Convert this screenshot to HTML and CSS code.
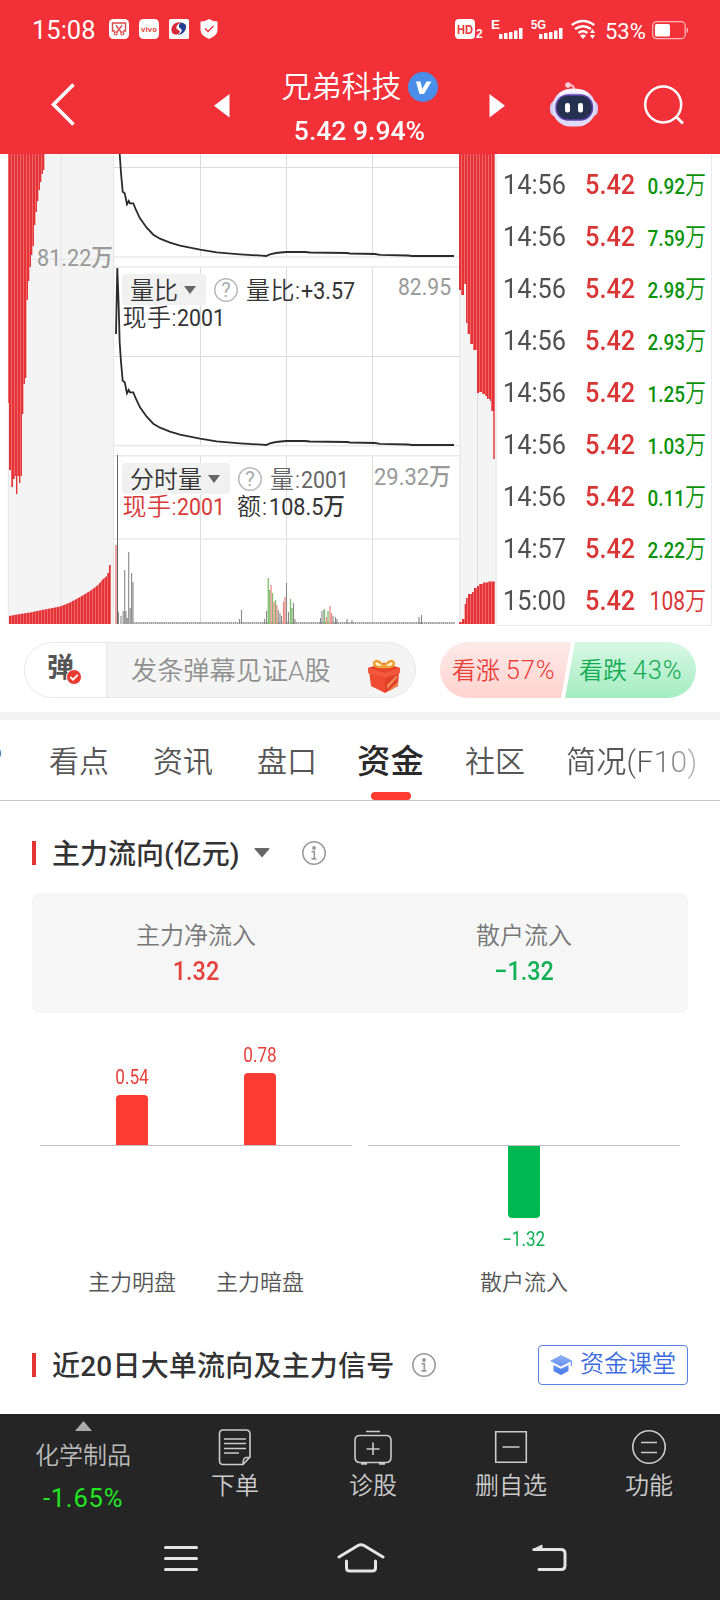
FILE: index.html
```html
<!DOCTYPE html>
<html lang="zh-CN">
<head>
    <meta charset="UTF-8">
    <meta name="viewport" content="width=device-width, initial-scale=1.0">
    <title>兄弟科技</title>
    <link rel="stylesheet" href="styles.css">
</head>
<body>
    <div class="app">
        <!-- Header -->
        <header class="header">
            <div class="status-bar">
                <span class="clock">15:08</span>
                <div class="status-left">
                    <svg width="20" height="20" viewBox="0 0 20 20">
                        <rect width="20" height="20" rx="4.5" fill="#fff"/>
                        <path d="M6 12H3.500V4H16.500V12H14M7 6.500L12.500 13.500M13 6.500L7.500 13.500" fill="none" stroke="#dc4a4c" stroke-width="1.400"/>
                        <circle cx="6.700" cy="14.500" r="1.500" fill="none" stroke="#dc4a4c" stroke-width="1.200"/>
                        <circle cx="13.300" cy="14.500" r="1.500" fill="none" stroke="#dc4a4c" stroke-width="1.200"/>
                    </svg>
                    <svg width="20" height="20" viewBox="0 0 20 20">
                        <rect width="20" height="20" rx="4.500" fill="#fff"/>
                        <text x="2" y="12.500" textLength="16" lengthAdjust="spacingAndGlyphs" class="vivo">vivo</text>
                    </svg>
                    <svg width="20" height="20" viewBox="0 0 20 20">
                        <rect width="20" height="20" rx="1.500" fill="#fff"/>
                        <path d="M12 3.500C6 2.500 2 7 2.500 11.500C3 15 6 16 8 15.500C12 14 11.500 11.500 8.500 10.500C6 9 8 5 12 3.500Z" fill="#d8283c"/>
                        <path d="M12 3.500C15 4 17.500 5 17 8.500C16.500 12.500 13 16 8.500 16C12.500 14 14 11.500 11.500 9.500C9 8 9.500 5.500 12 3.500Z" fill="#233f94"/>
                    </svg>
                    <svg class="shield" width="18" height="20" viewBox="0 0 18 20">
                        <path d="M9 0Q13 2.500 17.500 2.500V11Q17.500 16.500 9 20Q.5 16.500 .5 11V2.500Q5 2.500 9 0Z" fill="#fff"/>
                        <path d="M5 9.500L8 12.500L13.500 7" fill="none" stroke="#ef3038" stroke-width="1.300"/>
                    </svg>
                </div>
                <div class="status-right">
                    <svg width="29" height="22" viewBox="0 0 29 22">
                        <rect y="1" width="20" height="20" rx="4" fill="#fff"/>
                        <text x="2" y="15.500" textLength="16" lengthAdjust="spacingAndGlyphs" class="hd">HD</text>
                        <text x="21" y="20" class="sim">2</text>
                    </svg>
                    <svg width="32" height="22" viewBox="0 0 32 22" fill="#fff">
                        <text x="0" y="11" class="net">E</text>
                        <path d="M8 16h3.500v5H8zM13 15h3.500v6H13zM18 14h3.500v7H18zM23 12.500h3.500V21H23zM28 10h3.500v11H28z"/>
                    </svg>
                    <svg width="32" height="22" viewBox="0 0 32 22" fill="#fff">
                        <text x="0" y="11" textLength="15" lengthAdjust="spacingAndGlyphs" class="net">5G</text>
                        <path d="M8 16h3.500v5H8zM13 15h3.500v6H13zM18 14h3.500v7H18zM23 12.500h3.500V21H23zM28 10h3.500v11H28z"/>
                    </svg>
                    <svg width="25" height="22" viewBox="0 0 25 22">
                        <path d="M.8 7Q12 -1 23.200 7M4 11Q12 5.500 20 11M7.500 15Q12 11.500 16.500 15" fill="none" stroke="#fff" stroke-width="2.400"/>
                        <path d="M9 17.500Q12 15.500 15 17.500L12 21ZM19 15l2.500-4 2.500 4zM19 17h5l-2.500 4z" fill="#fff"/>
                    </svg>
                    <span class="battery-text">53%</span>
                    <svg width="36" height="20" viewBox="0 0 36 20">
                        <rect x=".7" y="1.700" width="32.500" height="17" rx="4" fill="none" stroke="#fbb" stroke-width="1.200"/>
                        <rect x="3" y="4" width="15" height="12.500" rx="1.500" fill="#fff"/>
                        <path d="M35.300 8v4.500" stroke="#fbb" stroke-width="1.300"/>
                    </svg>
                </div>
            </div>
            <div class="title-bar">
                <svg class="back" width="25" height="44" viewBox="0 0 25 44">
                    <path d="M22.500 1.500L2.500 21.500L22.500 41.500" fill="none" stroke="#fff" stroke-width="3.600"/>
                </svg>
                <svg class="prev" width="16" height="24" viewBox="0 0 16 24"><path d="M15.500 0V23.500L0 11.800Z" fill="#fff"/></svg>
                <div class="stock">
                    <div class="stock-name">
                        <h1>兄弟科技</h1>
                        <svg width="30" height="30" viewBox="0 0 30 30">
                            <circle cx="15" cy="15" r="15" fill="#4a8eea"/>
                            <path d="M8 9.500H12.500L14.200 17L18.500 9.500H23.500L16 22H11.500Z" fill="#fff"/>
                        </svg>
                    </div>
                    <div class="stock-price">5.42 9.94%</div>
                </div>
                <svg class="next" width="16" height="24" viewBox="0 0 16 24"><path d="M.5 0V23.500L16 11.800Z" fill="#fff"/></svg>
                <svg class="robot" width="48" height="46" viewBox="0 0 48 46">
                    <path d="M24 8Q24.500 2.500 18 3" fill="none" stroke="#f3c4d6" stroke-width="2"/>
                    <circle cx="18" cy="3" r="2.800" fill="#f8ccd8"/>
                    <rect x="0" y="18" width="48" height="17" rx="7" fill="#cfcdf6"/>
                    <rect x="2.500" y="7" width="43" height="37.500" rx="18" fill="#dedcfa"/>
                    <path d="M10 13Q23 4 38 13" fill="none" stroke="#faf5ff" stroke-width="4"/>
                    <rect x="6" y="13" width="36.500" height="25" rx="12" fill="#26304f" stroke="#6445b5" stroke-width="1.500"/>
                    <rect x="15" y="21" width="5" height="9.500" rx="2.200" fill="#fff"/>
                    <rect x="28" y="21" width="5" height="9.500" rx="2.200" fill="#fff"/>
                </svg>
                <svg class="search" width="40" height="40" viewBox="0 0 40 40">
                    <circle cx="19.200" cy="19.500" r="18" fill="none" stroke="#fff" stroke-width="2.500"/>
                    <path d="M32 31.500L39 38.500" stroke="#fff" stroke-width="3"/>
                </svg>
            </div>
        </header>

        <!-- Intraday charts and trade list -->
        <section class="market">
            <svg class="charts" width="497" height="474" viewBox="0 154 497 474">
                <defs>
                    <pattern id="stripes" width="3" height="10" patternUnits="userSpaceOnUse">
                        <rect width="3" height="10" fill="#e53236"/>
                        <rect x="2" width="1" height="10" fill="#ee6a6a"/>
                    </pattern>
                </defs>

                <!-- side strips -->
                <rect x="8" y="154" width="105" height="470" fill="#f4f4f4"/>
                <rect x="460" y="154" width="35" height="470" fill="#f4f4f4"/>
                <path d="M8.500 154V624M61 154V624M113.500 154V624M460 154V624M496 154V624" class="edge"/>
                <path d="M477.500 154V624" class="grid"/>
                <path d="M28 259.500H113" class="edge"/>
                <path fill="url(#stripes)" d="M8 154V403H9V470H11V487H13V479H15V476H16V494H17.500V476H19V483H20.500V476H22V414H23.500V384H25V378H26.500V300H28V281H29.500V267H31V255H32.500V246H34V225H35.500V212H37V201H38.500V190H40V182H41.500V174H43V170H44.500V154Z"/>
                <path fill="url(#stripes)" d="M9 624V616L20 614L30 612.500L42 610L60 606.500L70 602.500L80 597L90 591L98 585L103 579L107 576V573H109V565H111V624Z"/>
                <path fill="url(#stripes)" d="M459 154V290H461V295H464V284H466V323H467.500V334H470V344H473V350H477V393H479V392H482V394H485V396H487V399H490V401H491V411H493.300V459H495V154Z"/>
                <path fill="url(#stripes)" d="M459 624V622H462V619H464.500V604H466V598H468V594H472V592H474V588H477V586H479V584H483V582.500H488V581.500H495V624Z"/>

                <!-- grid -->
                <path d="M200.500 154V257M286.500 154V257M372.500 154V257M200.500 267V445M286.500 267V445M372.500 267V445M200.500 456V624M286.500 456V624M372.500 456V624M114 167.500H459M114 356.500H459" class="grid"/>
                <path d="M114 257H459M114 267H459M114 445.700H459M114 455.800H459M114 539H459" class="edge"/>

                <!-- ratio curves -->
                <path class="curve" d="M119.700 154L121 173L122.700 191.700L124.700 193.300L127 204.300L128.700 201L130 203.300H133.300L136 210L140 218.300L146.700 227.700L153.300 234.700L160 238.700L170 242.700L180 245.700L200 249.700L216.700 252.300L240 254.300L262 255.700L266 256L270 254.300L276 253L286 252H305L310 252.500L347 253L350 253.500L375 254L380 254.800L408 255.500L412 256H454"/>
                <path class="curve" d="M116 334L117.300 268L118.500 300L119.700 343L121 362L122.700 380.700L124.700 382.300L127 393.300L128.700 390L130 392.300H133.300L136 399L140 407.300L146.700 416.700L153.300 423.700L160 427.700L170 431.700L180 434.700L200 438.700L216.700 441.300L240 443.300L262 444.700L266 445L270 443.300L276 442L286 441H305L310 441.500L347 442L350 442.500L375 443L380 443.800L408 444.500L412 445H454"/>

                <!-- volume bars -->
                <path d="M117.500 455V624" stroke="#666"/>
                <path d="M116 545V624" stroke="#eba3a3" stroke-width="2"/>
                <path d="M134 623H455" stroke="#999" stroke-width="2" stroke-dasharray="1.500 .6"/>
                <path class="vol-gray" d="M118.500 624V612M121 624V616M123.200 624V611M124.700 624V570M126 624V611M127.300 624V618M128.700 624V552M130.200 624V608M131.600 624V573M133 624V582M241.500 624V610M239.500 624V619M264.500 624V619M266.500 624V611M278.300 624V610M280 624V613M281.500 624V616M286.500 624V583M288.500 624V612M293.500 624V603M295 624V619M320.500 624V618M322 624V611M324 624V609M333 624V616M335.500 624V617M337 624V619M347 624V619M352 624V620M419 624V617M421.500 624V615"/>
                <path class="vol-green" d="M268.300 624V578M269.800 624V590M272.500 624V593M275.500 624V600M290.500 624V599M292 624V608M324.500 624V610M328 624V611"/>
                <path class="vol-red" d="M271 624V585M274 624V602M276.800 624V605M283.500 624V602M285 624V597M326.500 624V617M330 624V606M331.500 624V613"/>

                <!-- labels -->
                <text x="37" y="266" textLength="76" lengthAdjust="spacingAndGlyphs" fill="#999" class="num">81.22万</text>
                <rect x="122" y="274" width="84" height="31" rx="3" fill="#f1f1f1"/>
                <text x="130" y="299" fill="#333">量比</text>
                <path d="M184 286h12l-6 8z" fill="#666"/>
                <circle cx="226" cy="290" r="11.300" class="help"/>
                <text x="226" y="297" text-anchor="middle" class="help-mark">?</text>
                <text x="246" y="299" textLength="54" fill="#333">量比:</text>
                <text x="301" y="299" textLength="54" lengthAdjust="spacingAndGlyphs" fill="#333" class="num">+3.57</text>
                <text x="398" y="295" textLength="53" lengthAdjust="spacingAndGlyphs" fill="#999" class="num">82.95</text>
                <text x="122.500" y="326" textLength="54" fill="#333">现手:</text>
                <text x="177" y="326" textLength="48" lengthAdjust="spacingAndGlyphs" fill="#333" class="num">2001</text>

                <rect x="122" y="463" width="108" height="31" rx="3" fill="#f1f1f1"/>
                <text x="130" y="488" fill="#333">分时量</text>
                <path d="M208 475h12l-6 8z" fill="#666"/>
                <circle cx="250" cy="479" r="11.300" class="help"/>
                <text x="250" y="486" text-anchor="middle" class="help-mark">?</text>
                <text x="270" y="488" textLength="30" fill="#666">量:</text>
                <text x="301" y="488" textLength="48" lengthAdjust="spacingAndGlyphs" fill="#666" class="num">2001</text>
                <text x="374" y="485" textLength="77" lengthAdjust="spacingAndGlyphs" fill="#999" class="num">29.32万</text>
                <text x="122.500" y="515" textLength="54" fill="#d83838">现手:</text>
                <text x="177" y="515" textLength="48" lengthAdjust="spacingAndGlyphs" fill="#d83838" class="num">2001</text>
                <text x="237" y="515" textLength="30" fill="#333">额:</text>
                <text x="269" y="515" textLength="76" lengthAdjust="spacingAndGlyphs" fill="#333" class="num">108.5万</text>
            </svg>

            <ul class="trades">
                <li><span class="time">14:56</span><span class="price">5.42</span><span class="vol">0.92<i>万</i></span></li>
                <li><span class="time">14:56</span><span class="price">5.42</span><span class="vol">7.59<i>万</i></span></li>
                <li><span class="time">14:56</span><span class="price">5.42</span><span class="vol">2.98<i>万</i></span></li>
                <li><span class="time">14:56</span><span class="price">5.42</span><span class="vol">2.93<i>万</i></span></li>
                <li><span class="time">14:56</span><span class="price">5.42</span><span class="vol">1.25<i>万</i></span></li>
                <li><span class="time">14:56</span><span class="price">5.42</span><span class="vol">1.03<i>万</i></span></li>
                <li><span class="time">14:56</span><span class="price">5.42</span><span class="vol">0.11<i>万</i></span></li>
                <li><span class="time">14:57</span><span class="price">5.42</span><span class="vol">2.22<i>万</i></span></li>
                <li><span class="time">15:00</span><span class="price">5.42</span><span class="vol up">108<i>万</i></span></li>
            </ul>
        </section>

        <!-- Comment input and vote -->
        <section class="danmu-row">
            <div class="danmu">
                <div class="danmu-toggle">
                    <span>弹</span>
                    <svg class="danmu-check" width="16" height="16" viewBox="0 0 16 16">
                        <circle cx="8" cy="8" r="7.500" fill="#e93b30" stroke="#fff"/>
                        <path d="M4.300 8L7 10.700L11.800 5.800" fill="none" stroke="#fff" stroke-width="1.800"/>
                    </svg>
                </div>
                <div class="danmu-input">发条弹幕见证A股</div>
                <svg class="gift" width="32" height="36" viewBox="0 0 32 36">
                    <path d="M1 13L17 19V35L3 28Z" fill="#ee4b31"/>
                    <path d="M31 13L17 19V35L30 28Z" fill="#e0402c"/>
                    <path d="M0 10L16 5L32 10V15L17 20L0 15Z" fill="#f4593c"/>
                    <path d="M0 10L16 5L32 10L17 15Z" fill="#e8452f"/>
                    <path d="M19 27L29 17V20L19 31ZM20 33L30 24V27L22 33Z" fill="#f58a52"/>
                    <path d="M16 8Q8 0 6 5Q6 10 16 9Q26 10 26 5Q24 0 16 8Z" fill="#fff3d0" stroke="#f0a033" stroke-width="2.400"/>
                </svg>
            </div>
            <div class="vote">
                <div class="vote-up">看涨 <span>57%</span></div>
                <div class="vote-down">看跌 <span>43%</span></div>
            </div>
        </section>

        <!-- Tabs -->
        <nav class="tabs">
            <span class="tab-cut">?</span>
            <a>看点</a>
            <a>资讯</a>
            <a>盘口</a>
            <a class="active">资金</a>
            <a>社区</a>
            <a class="fade">简况(F10)</a>
        </nav>

        <!-- Capital flow -->
        <section class="flow">
            <div class="section-title">
                <h2>主力流向(亿元)</h2>
                <svg class="drop" width="16" height="10" viewBox="0 0 16 10"><path d="M1 0H15Q16 .5 15 1.500L8 9.500L1 1.500Q0 .5 1 0Z" fill="#666"/></svg>
                <svg class="info" width="24" height="24" viewBox="0 0 24 24">
                    <circle cx="12" cy="12" r="11.200" fill="none" stroke="#999" stroke-width="1.500"/>
                    <circle cx="12" cy="7" r="1.900" fill="#999"/>
                    <path d="M9.500 10.700H12.300V17.500M9.500 17.800H14.500" fill="none" stroke="#999" stroke-width="1.700"/>
                </svg>
            </div>

            <div class="summary">
                <div>
                    <p>主力净流入</p>
                    <strong class="red">1.32</strong>
                </div>
                <div>
                    <p>散户流入</p>
                    <strong class="green">−1.32</strong>
                </div>
            </div>

            <div class="bar-charts">
                <div class="bar-chart">
                    <div class="col">
                        <div class="above"><span class="red">0.54</span><div class="bar bar-red" style="height: 50px"></div></div>
                        <div class="below"></div>
                        <label>主力明盘</label>
                    </div>
                    <div class="col">
                        <div class="above"><span class="red">0.78</span><div class="bar bar-red" style="height: 72px"></div></div>
                        <div class="below"></div>
                        <label>主力暗盘</label>
                    </div>
                </div>
                <div class="bar-chart">
                    <div class="col">
                        <div class="above"></div>
                        <div class="below"><div class="bar bar-green" style="height: 72px"></div><span class="green">−1.32</span></div>
                        <label>散户流入</label>
                    </div>
                </div>
            </div>

            <div class="section-title">
                <h2 class="wide">近20日大单流向及主力信号</h2>
                <svg class="info info-near" width="24" height="24" viewBox="0 0 24 24">
                    <circle cx="12" cy="12" r="11.200" fill="none" stroke="#999" stroke-width="1.500"/>
                    <circle cx="12" cy="7" r="1.900" fill="#999"/>
                    <path d="M9.500 10.700H12.300V17.500M9.500 17.800H14.500" fill="none" stroke="#999" stroke-width="1.700"/>
                </svg>
                <a class="lesson">
                    <svg width="22" height="22" viewBox="0 0 22 22">
                        <defs>
                            <linearGradient id="cap" x1="0" y1="0" x2="0" y2="1">
                                <stop offset="0" stop-color="#8fb2f5"/>
                                <stop offset="1" stop-color="#4478ea"/>
                            </linearGradient>
                        </defs>
                        <path d="M11 1L22 6.500V12H20.800V7.500L11 12.500L0 7ZM3.500 11L11 14.700L18.500 11V17L11 21L3.500 17Z" fill="url(#cap)"/>
                    </svg>
                    <span>资金课堂</span>
                </a>
            </div>
        </section>

        <!-- Bottom toolbar -->
        <footer class="footer">
            <div class="toolbar">
                <div class="index">
                    <svg width="17" height="10" viewBox="0 0 17 10"><path d="M8.500 0L17 10H0Z" fill="#aaa"/></svg>
                    <span>化学制品</span>
                    <b>-1.65%</b>
                </div>
                <div class="tool">
                    <svg width="36" height="38" viewBox="0 0 36 38" class="tool-icon">
                        <path d="M6 2H29Q33 2 33 6V29L26 36.500H6Q2.500 36.500 2.500 32.500V6Q2.500 2 6 2ZM7 11H29M7 15.500H29M7 20.500H29M7 25H22M33 29.500H29Q26 30 26 36"/>
                    </svg>
                    <span>下单</span>
                </div>
                <div class="tool">
                    <svg width="38" height="38" viewBox="0 0 38 38" class="tool-icon">
                        <path d="M6 7.500H32Q37 7.500 37 12.500V29Q37 34.500 32 34.500H6Q1 34.500 1 29V12.500Q1 7.500 6 7.500ZM12 3.500H26M19 14.500V27M12.500 21H25.500M7 36H13M25 36H31"/>
                    </svg>
                    <span>诊股</span>
                </div>
                <div class="tool">
                    <svg width="36" height="38" viewBox="0 0 36 38" class="tool-icon">
                        <path d="M2.700 3.700H33.300V34.300H2.700ZM9.500 19H26.500"/>
                    </svg>
                    <span>删自选</span>
                </div>
                <div class="tool">
                    <svg width="36" height="38" viewBox="0 0 36 38" class="tool-icon">
                        <circle cx="18" cy="19" r="16.200"/>
                        <path d="M10 14.500H26M10 24.500H26"/>
                    </svg>
                    <span>功能</span>
                </div>
            </div>
            <div class="sys-nav">
                <svg width="34" height="30" viewBox="0 0 34 30"><path d="M1.500 4.500H32.500M1.500 15.500H32.500M1.500 26.500H32.500"/></svg>
                <svg width="48" height="30" viewBox="0 0 48 30"><path d="M2 14L21 2.500Q24 1 27 2.500L46 14M9.500 18V25Q9.500 28 13 28H35Q38.500 28 38.500 25V18"/></svg>
                <svg width="36" height="30" viewBox="0 0 36 30"><path d="M2 6.500H29Q33 6.500 33 10.500V22.500Q33 26.500 29 26.500H7"/><path d="M1 6.500L10 2V7Z" fill="#e4e4e4" stroke-width="1"/></svg>
            </div>
        </footer>
    </div>
</body>
</html>
```

FILE: styles.css
```css
/* General Styles */
* {
    box-sizing: border-box;
}

body {
    margin: 0;
    background: #fff;
    font-family: Roboto, "Noto Sans CJK SC", sans-serif;
    color: #333;
}

svg {
    display: block;
    flex-shrink: 0;
}

h1, h2, p, ul {
    margin: 0;
    padding: 0;
}

.app {
    width: 720px;
    height: 1600px;
    overflow: hidden;
}

.red {
    color: #e5403a;
}

.green {
    color: #10b055;
}

/* Header */
.header {
    height: 154px;
    background: #f23038;
    color: #fff;
}

.status-bar {
    display: flex;
    height: 60px;
    padding: 18px 32px 0 32px;
}

.clock {
    width: 77px;
    font-size: 25.5px;
    line-height: 24px;
}

.status-left {
    display: flex;
    gap: 10px;
    padding-top: 1px;
}

.shield {
    margin-left: 1px;
}

.status-right {
    display: flex;
    gap: 8px;
    margin-left: auto;
}

.status-right svg:first-child {
    margin-right: -1px;
}

.status-right svg:last-child {
    margin-top: 2px;
}

.battery-text {
    width: 43px;
    margin-left: 1px;
    margin-right: -4px;
    font-size: 22px;
    line-height: 27px;
}

.vivo {
    font: 700 7px "Open Sans", sans-serif;
    fill: #e0504f;
}

.hd {
    font: 700 12.5px "Liberation Sans", sans-serif;
    fill: #e8353b;
}

.sim {
    font: 700 12px "Liberation Sans", sans-serif;
    fill: #fff;
}

.net {
    font: 700 13.5px "Liberation Sans", sans-serif;
}

.title-bar {
    display: flex;
    height: 94px;
}

.back {
    margin: 23px 138px 0 51px;
}

.prev, .next {
    margin-top: 34px;
}

.stock {
    width: 259px;
    text-align: center;
}

.stock-name {
    display: flex;
    justify-content: center;
    align-items: center;
    gap: 6px;
    height: 54px;
}

.stock-name h1 {
    font-size: 30px;
    font-weight: 350;
    line-height: 58px;
}

.stock-price {
    font-size: 26px;
    font-weight: 500;
    line-height: 35px;
    transform: scaleX(1.02);
}

.robot {
    margin: 22px 46px 0 45px;
}

.search {
    margin-top: 25px;
}

/* Charts and trades */
.market {
    display: flex;
    height: 474px;
}

.charts {
    font-size: 24px;
    font-weight: 350;
}

.charts .num {
    font-weight: 450;
    font-size: 23.5px;
}

.edge {
    stroke: #e9e9e9;
    stroke-width: 1.5;
    fill: none;
}

.grid {
    stroke: #dcdcdc;
    stroke-width: 1;
    fill: none;
}

.curve {
    fill: none;
    stroke: #2b2b2b;
    stroke-width: 1.8;
}

.vol-gray {
    stroke: #888;
    stroke-width: 1.1;
}

.vol-green {
    stroke: #7fbd6c;
    stroke-width: 1.3;
}

.vol-red {
    stroke: #e88b87;
    stroke-width: 1.3;
}

.help {
    fill: #fff;
    stroke: #bbb;
    stroke-width: 1.5;
}

.help-mark {
    font-size: 20px;
    font-weight: 400;
    fill: #aaa;
}

.trades {
    width: 215px;
    height: 472px;
    padding: 4px 6px 0 6px;
    list-style: none;
    border-right: 1px solid #e9e9e9;
    border-bottom: 1px solid #e9e9e9;
}

.trades li {
    display: flex;
    height: 52px;
    line-height: 53px;
}

.time, .price {
    font-size: 27.5px;
    transform: scaleX(0.92);
    transform-origin: left;
}

.time {
    width: 82px;
    color: #505050;
    font-weight: 450;
}

.price {
    width: 50px;
    color: #d93535;
    font-weight: 500;
}

.vol {
    flex: 1;
    text-align: right;
    white-space: nowrap;
    font-size: 22.5px;
    font-weight: 500;
    line-height: 56px;
    color: #0c930c;
    transform: translateX(1px) scaleX(0.84);
    transform-origin: right;
}

.vol i {
    font-style: normal;
    font-size: 25px;
    font-weight: 350;
}

.vol.up {
    font-size: 25px;
    font-weight: 450;
    color: #d93535;
}

/* Comment input and vote */
.danmu-row {
    display: flex;
    justify-content: space-between;
    height: 92px;
    padding: 14px 24px 0 24px;
    border-bottom: 8px solid #f4f4f4;
}

.danmu {
    display: flex;
    width: 392px;
    height: 56px;
    border: 1px solid #e8e8e8;
    border-radius: 28px;
    overflow: hidden;
    background: #f4f4f4;
}

.danmu-toggle {
    position: relative;
    width: 83px;
    padding-left: 22px;
    background: #fff;
    border-right: 2px solid #ececec;
    font-size: 27px;
    font-weight: 700;
    line-height: 51px;
    color: #555;
}

.danmu-check {
    position: absolute;
    left: 41px;
    top: 26px;
}

.danmu-input {
    flex: 1;
    padding-left: 23px;
    font-size: 26.2px;
    font-weight: 350;
    line-height: 57px;
    color: #909090;
}

.gift {
    margin: 15px 15px 0 0;
}

.vote {
    display: flex;
    height: 56px;
    border-radius: 28px;
    overflow: hidden;
    font-size: 24px;
    line-height: 57px;
    font-weight: 350;
}

.vote span {
    font-size: 25.5px;
    letter-spacing: 0.8px;
}

.vote-up {
    width: 131px;
    padding-left: 12px;
    color: #e9403a;
    background: linear-gradient(#fdeae8, #ffd3cf);
    clip-path: polygon(0 0, 100% 0, 121px 100%, 0 100%);
    white-space: nowrap;
}

.vote-down {
    width: 131px;
    margin-left: -6px;
    padding-left: 14px;
    color: #12ab52;
    background: linear-gradient(#d8f8e4, #a5ecc2);
    clip-path: polygon(10px 0, 100% 0, 100% 100%, 0 100%);
    white-space: nowrap;
}

/* Tabs */
.tabs {
    display: flex;
    height: 81px;
    border-bottom: 1px solid #c8c8c8;
    font-size: 30px;
    font-weight: 350;
    line-height: 83px;
    color: #555;
    white-space: nowrap;
}

.tabs a {
    margin-right: 44px;
}

.tab-cut {
    width: 18px;
    margin-left: -14px;
    margin-right: 45px;
    font-size: 36px;
}

.tabs a.active {
    display: flex;
    flex-direction: column;
    align-items: center;
    height: 80px;
    margin-left: -4px;
    margin-right: 41px;
    font-size: 33.5px;
    font-weight: 500;
    color: #2a2a2a;
}

.tabs a.active::after {
    content: "";
    width: 40px;
    height: 8px;
    margin-top: -11px;
    border-radius: 4px;
    background: #ff3b30;
}

.tabs a.fade {
    margin-left: -3px;
    margin-right: 0;
    letter-spacing: 0.3px;
    color: transparent;
    background: linear-gradient(90deg, #555 60%, #bbb);
    -webkit-background-clip: text;
    background-clip: text;
}

/* Capital flow */
.flow {
    height: 613px;
    padding: 25px 32px 0 32px;
}

.section-title {
    display: flex;
    align-items: center;
    height: 54px;
}

.section-title::before {
    content: "";
    width: 4px;
    height: 24px;
    margin-right: 16px;
    background: #e53535;
}

.section-title h2 {
    padding-top: 4px;
    font-size: 28px;
    font-weight: 500;
    line-height: 50px;
}

.section-title h2.wide {
    letter-spacing: 0.2px;
}

.drop {
    margin-left: 15px;
}

.info {
    margin-left: 32px;
}

.info-near {
    margin-left: 18px;
}

.summary {
    display: flex;
    height: 120px;
    margin-top: 13px;
    padding-top: 25px;
    border-radius: 8px;
    background: #f6f6f6;
    text-align: center;
}

.summary div {
    flex: 1;
}

.summary p {
    font-size: 24px;
    font-weight: 350;
    line-height: 36px;
    color: #777;
}

.summary strong {
    display: block;
    font-size: 26px;
    font-weight: 500;
    line-height: 35px;
    transform: scaleX(0.9);
}

.bar-charts {
    display: flex;
    justify-content: space-between;
    padding: 0 8px;
    height: 325px;
}

.bar-chart {
    display: flex;
    justify-content: center;
    width: 312px;
    background: linear-gradient(#c0c0c0, #c0c0c0) 0 132px / 100% 1px no-repeat;
}

.col {
    display: flex;
    flex-direction: column;
    align-items: center;
    width: 128px;
}

.above, .below {
    display: flex;
    flex-direction: column;
    align-items: center;
}

.above {
    justify-content: flex-end;
    height: 132px;
}

.below {
    height: 123px;
    padding-top: 1px;
}

.bar {
    width: 32px;
}

.bar-red {
    border-radius: 4px 4px 0 0;
    background: #fc3b32;
}

.bar-green {
    border-radius: 0 0 4px 4px;
    background: #00b852;
}

.col span {
    font-size: 19.5px;
    font-weight: 450;
    line-height: 34px;
    transform: scaleX(0.88);
}

.col .below span {
    margin-top: 5px;
}

.col label {
    font-size: 22px;
    font-weight: 350;
    line-height: 30px;
    color: #555;
}

.lesson {
    display: flex;
    align-items: center;
    gap: 8px;
    width: 150px;
    height: 40px;
    margin-left: auto;
    padding-left: 11px;
    border: 1px solid #5a82dc;
    border-radius: 4px;
    font-size: 24px;
    font-weight: 350;
    line-height: 36px;
    color: #3d6ce0;
    white-space: nowrap;
}

.lesson span {
    margin-top: -2px;
}

/* Bottom toolbar */
.footer {
    height: 186px;
    background: #252525;
    color: #ccc;
}

.toolbar {
    display: flex;
    height: 110px;
    font-size: 24px;
    font-weight: 350;
}

.index {
    display: flex;
    flex-direction: column;
    align-items: center;
    width: 166px;
    padding-top: 7px;
}

.index span {
    margin-top: 5px;
    line-height: 40px;
    color: #bbb;
}

.index b {
    font-size: 25.5px;
    font-weight: 400;
    line-height: 44px;
    letter-spacing: 0.8px;
    color: #22e622;
}

.tool {
    display: flex;
    flex-direction: column;
    align-items: center;
    width: 138px;
    padding-top: 14px;
}

.tool span {
    line-height: 41px;
}

.tool-icon {
    fill: none;
    stroke: #ccc;
    stroke-width: 1.6;
}

.sys-nav {
    display: flex;
    padding-top: 19px;
}

.sys-nav svg {
    fill: none;
    stroke: #e4e4e4;
    stroke-width: 3;
    stroke-linecap: round;
    margin-left: 139px;
}

.sys-nav svg:first-child {
    margin-left: 164px;
}

.sys-nav svg:last-child {
    margin-left: 147px;
}
```
